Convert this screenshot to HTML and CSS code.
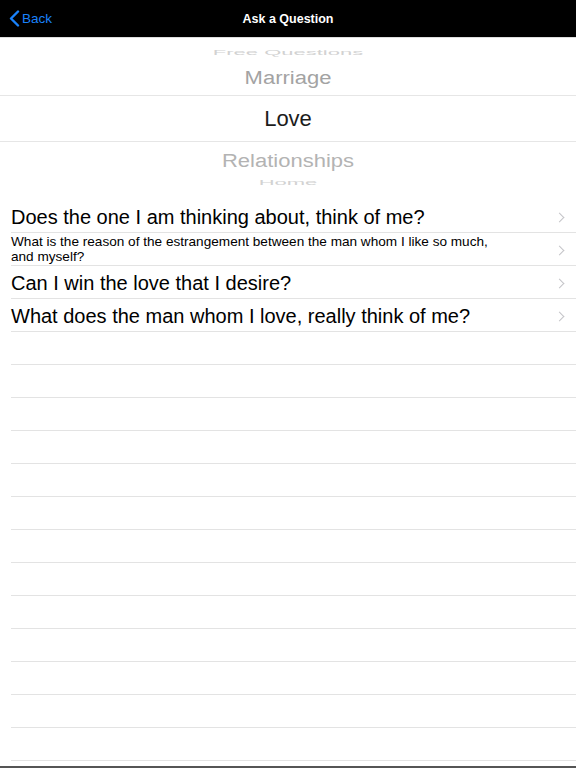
FILE: index.html
```html
<!DOCTYPE html>
<html lang="en">
<head>
  <meta charset="UTF-8" />
  <meta name="viewport" content="width=device-width, initial-scale=1" />
  <title>Ask a Question</title>
  <link rel="stylesheet" href="styles.css">
</head>
<body>
  <div class="navbar">
    <a class="back" href="#">
      <svg width="11" height="17" viewBox="0 0 11 17"><polyline points="9,1.5 2,8.5 9,15.5" fill="none" stroke="#1a82fb" stroke-width="2.4" stroke-linecap="round" stroke-linejoin="round"/></svg>
      <span>Back</span>
    </a>
    <div class="title">Ask a Question</div>
  </div>

  <div class="picker">
    <div class="wheel-item far top"><span>Free Questions</span></div>
    <div class="wheel-item near"><span>Marriage</span></div>
    <div class="wheel-item selected"><span>Love</span></div>
    <div class="wheel-item near low"><span>Relationships</span></div>
    <div class="wheel-item far bottom"><span>Home</span></div>
  </div>

  <ul class="questions">
    <li><span class="q">Does the one I am thinking about, think of me?</span><i class="chev"></i></li>
    <li><span class="q small">What is the reason of the estrangement between the man whom I like so much, and myself?</span><i class="chev"></i></li>
    <li><span class="q">Can I win the love that I desire?</span><i class="chev"></i></li>
    <li><span class="q">What does the man whom I love, really think of me?</span><i class="chev"></i></li>
    <li></li>
    <li></li>
    <li></li>
    <li></li>
    <li></li>
    <li></li>
    <li></li>
    <li></li>
    <li></li>
    <li></li>
    <li></li>
    <li></li>
    <li></li>
  </ul>

  <div class="home-bar"></div>
</body>
</html>
```

FILE: styles.css
```css
body {
  font-family: 'Liberation Sans', Arial, sans-serif;
  background: #fff;
  color: #000;
  margin: 0;
  padding: 0;
  width: 576px;
  height: 768px;
  overflow: hidden;
  display: flex;
  flex-direction: column;
}
.navbar {
  height: 37px;
  background: #000;
  border-bottom: 1px solid #dedede;
  display: flex;
  align-items: center;
  justify-content: center;
  position: relative;
  flex-shrink: 0;
}
.back {
  position: absolute;
  left: 9px;
  top: 10px;
  display: flex;
  align-items: center;
  gap: 2px;
  color: #1a82fb;
  text-decoration: none;
  font-size: 13.5px;
}
.title {
  color: #fff;
  font-size: 12.5px;
  font-weight: bold;
}
.picker {
  height: 154px;
  display: flex;
  flex-direction: column;
  overflow: hidden;
  flex-shrink: 0;
}
.wheel-item {
  display: flex;
  align-items: center;
  justify-content: center;
  font-size: 22px;
  overflow: hidden;
}
.wheel-item span {
  display: block;
  white-space: nowrap;
}
.far {
  color: #d2d2d2;
}
.far.top {
  height: 26px;
  align-items: flex-start;
}
.far.top span {
  transform: scaleY(0.3);
  margin-top: 2px;
}
.far.bottom {
  height: 18px;
  align-items: flex-start;
}
.far.bottom span {
  transform: scaleY(0.3);
  margin-top: -4px;
}
.near {
  height: 31px;
  color: #a3a3a3;
}
.near span {
  transform: scaleY(0.82);
  margin-top: -4px;
}
.near.low {
  height: 32px;
  color: #b3b3b3;
}
.near.low span {
  transform: scaleY(0.8);
  margin-top: 5px;
}
.selected {
  height: 45px;
  border-top: 1px solid #e6e6e6;
  border-bottom: 1px solid #e6e6e6;
  color: #1c1c1c;
}
.questions {
  list-style: none;
  margin: 8px 0 0 0;
  padding: 0;
  flex-shrink: 0;
}
.questions li {
  height: 32px;
  margin-left: 11px;
  border-bottom: 1px solid #e3e3e3;
  display: flex;
  align-items: center;
  padding-right: 13px;
}
.q {
  flex: 1;
  font-size: 20px;
  line-height: 24px;
  color: #000;
  padding-top: 2px;
}
.q.small {
  font-size: 13.6px;
  line-height: 15px;
  padding-right: 50px;
  padding-top: 0;
}
.chev {
  width: 6px;
  height: 6px;
  border-top: 1.4px solid #c4c4c8;
  border-right: 1.4px solid #c4c4c8;
  transform: rotate(45deg);
  margin-top: 2px;
}
.home-bar {
  margin-top: auto;
  height: 2px;
  background: #555;
}
```
